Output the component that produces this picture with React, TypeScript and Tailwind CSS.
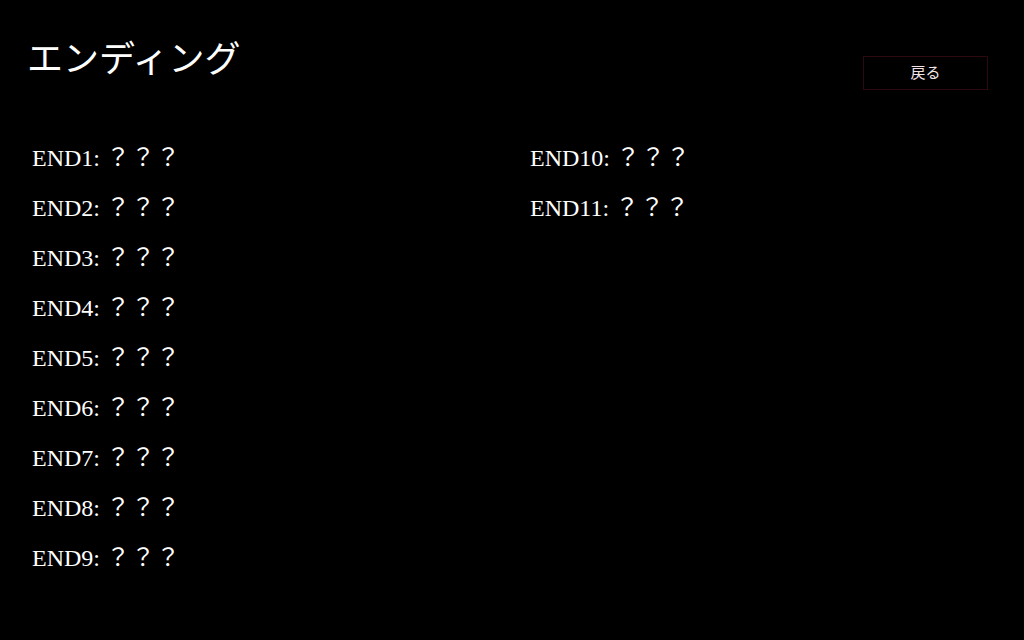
const ends = Array.from({ length: 11 }, (_, i) => `END${i + 1}`)

export default function App() {
  const font = { fontFamily: '"Liberation Serif", "Noto Sans CJK JP", serif' }
  const left = ends.slice(0, 9)
  const right = ends.slice(9)

  return (
    <div className="h-[640px] w-[1024px] overflow-hidden bg-black text-white" style={font}>
      <div className="flex items-start justify-between pl-[27px] pr-[36px] pt-[38px]">
        <h1 className="text-[36px] leading-[44px] text-white">エンディング</h1>
        <button
          type="button"
          className="mt-[18px] h-[34px] w-[125px] border border-[#2e0a10] bg-black text-[15px] text-[#f3e4e6]"
        >
          戻る
        </button>
      </div>
      <div className="grid grid-cols-[498px_1fr] pl-[32px] pt-[43px]">
        <ul>
          {left.map((e) => (
            <li key={e} className="h-[50px] text-[24px] leading-[50px]">
              {e}: <span className="tracking-[1px]">？？？</span>
            </li>
          ))}
        </ul>
        <ul>
          {right.map((e) => (
            <li key={e} className="h-[50px] text-[24px] leading-[50px]">
              {e}: <span className="tracking-[1px]">？？？</span>
            </li>
          ))}
        </ul>
      </div>
    </div>
  )
}
